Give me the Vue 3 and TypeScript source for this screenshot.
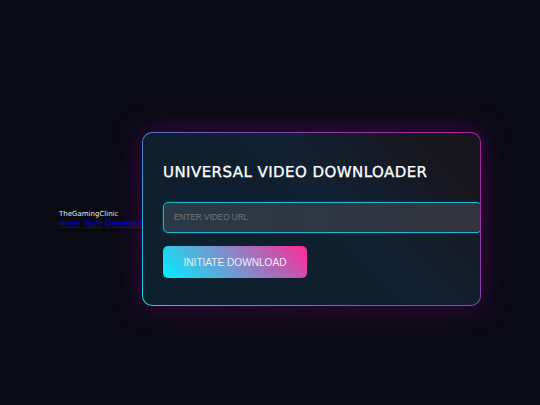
<script setup lang="ts">
const links: string[] = ['Home', 'Tools', 'Downloads']
</script>

<template>
  <div class="page">
    <header class="head">
      <div class="logo">TheGamingClinic</div>
      <nav class="nav">
        <a v-for="l in links" :key="l" href="#">{{ l }}</a>
      </nav>
    </header>
    <main class="card">
      <h1 class="title">UNIVERSAL VIDEO DOWNLOADER</h1>
      <input class="url" type="text" placeholder="ENTER VIDEO URL" />
      <button class="go" type="button">INITIATE DOWNLOAD</button>
    </main>
  </div>
</template>

<style>
html, body { margin: 0; background: #0a0a14; }
</style>

<style scoped>
.page {
  box-sizing: border-box;
  width: 540px;
  height: 405px;
  padding-top: 33px;
  display: flex;
  align-items: center;
  justify-content: center;
  background: #0a0a14;
  overflow: hidden;
  font-family: "Liberation Sans", Arial, sans-serif;
  text-rendering: geometricPrecision;
}
.head { width: 83px; flex: none; }
.logo {
  font-family: "DejaVu Sans", sans-serif;
  font-size: 7px;
  line-height: 9px;
  color: #e8e8f0;
  white-space: nowrap;
}
.nav { display: flex; gap: 3.4px; font-size: 8px; line-height: 9px; white-space: nowrap; }
.nav a { color: #0000ee; text-decoration: underline; }
.card {
  box-sizing: border-box;
  width: 339px;
  height: 174px;
  flex: none;
  padding: 20px;
  border: 1px solid transparent;
  border-radius: 10px;
  overflow: hidden;
  background:
    linear-gradient(45deg, #0d202e 0%, #101f2e 45%, #122233 58%, #17161f 88%) padding-box,
    linear-gradient(45deg, #22d0e4 0%, #6a5cc0 45%, #b0209a 100%) border-box;
  box-shadow: 0 0 30px rgba(190, 0, 200, 0.3);
}
.title {
  margin: 9px 0 20px;
  font-family: "DejaVu Sans", sans-serif;
  font-size: 15px;
  line-height: 20px;
  font-weight: 400;
  letter-spacing: 0.45px;
  -webkit-text-stroke: 0.3px #fff;
  color: #fff;
  white-space: nowrap;
}
.url {
  display: block;
  box-sizing: content-box;
  width: 297px;
  height: 29px;
  padding: 0 10px;
  margin: 0 0 13px;
  border: 1px solid #1cb8cc;
  border-radius: 5px;
  background: linear-gradient(90deg, #2a3a48, #33343f);
  box-shadow: 0 0 2px rgba(0, 230, 255, 0.35);
  color: #fff;
  font-family: "Liberation Sans", Arial, sans-serif;
  font-size: 8.2px;
  outline: none;
}
.url::placeholder { color: #75767c; opacity: 1; }
.go {
  display: block;
  width: 144px;
  height: 32px;
  padding: 0;
  border: 0;
  border-radius: 5px;
  background: linear-gradient(45deg, #00f0ff, #ff2a96);
  color: #f0eef8;
  font-family: "Liberation Sans", Arial, sans-serif;
  font-size: 10.1px;
}
</style>
